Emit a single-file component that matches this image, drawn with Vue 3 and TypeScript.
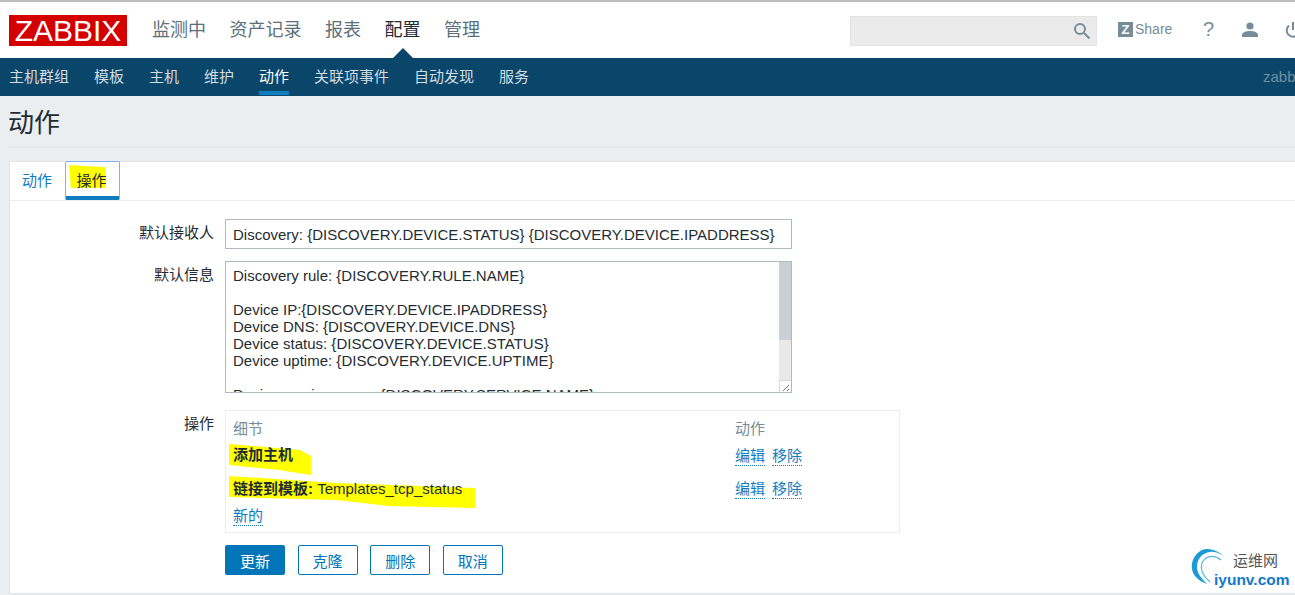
<script setup lang="ts">
const mainNav = ['监测中', '资产记录', '报表', '配置', '管理']
const subNav = ['主机群组', '模板', '主机', '维护', '动作', '关联项事件', '自动发现', '服务']
const message = `Discovery rule: {DISCOVERY.RULE.NAME}

Device IP:{DISCOVERY.DEVICE.IPADDRESS}
Device DNS: {DISCOVERY.DEVICE.DNS}
Device status: {DISCOVERY.DEVICE.STATUS}
Device uptime: {DISCOVERY.DEVICE.UPTIME}

Device service name: {DISCOVERY.SERVICE.NAME}
Device service port: {DISCOVERY.SERVICE.PORT}`
</script>

<template>
  <div class="page">
    <header class="top">
      <div class="logo">ZABBIX</div>
      <nav class="main-nav">
        <a v-for="n in mainNav" :key="n" :class="{ on: n === '配置' }">{{ n }}</a>
      </nav>
      <div class="tools">
        <div class="search">
          <svg width="18" height="18" viewBox="0 0 18 18" fill="none" stroke="#768d99" stroke-width="2">
            <circle cx="7" cy="7" r="5" />
            <path d="M11 11l5.500 5.500" />
          </svg>
        </div>
        <div class="share"><span class="z">Z</span>Share</div>
        <span class="help">?</span>
        <svg class="user" width="16" height="16" viewBox="0 0 16 16" fill="#768d99">
          <circle cx="8" cy="4" r="3.6" />
          <path d="M0 15v-2c0-2.500 4-4 8-4s8 1.500 8 4v2z" />
        </svg>
        <svg class="power" width="16" height="16" viewBox="0 0 16 16" fill="none" stroke="#768d99" stroke-width="2">
          <path d="M4 3.500a6.300 6.300 0 1 0 8 0" />
          <path d="M8 0v8" />
        </svg>
      </div>
    </header>
    <nav class="sub-nav">
      <a v-for="n in subNav" :key="n" :class="{ on: n === '动作' }">{{ n }}</a>
      <span class="server">zabbix</span>
    </nav>
    <main class="content">
      <h1 class="title">动作</h1>
      <section class="card">
        <div class="tabs">
          <a class="tab">动作</a>
          <a class="tab active"><i class="mark mark-tab"></i>操作</a>
        </div>
        <div class="form">
          <label>默认接收人</label>
          <input class="input" readonly value="Discovery: {DISCOVERY.DEVICE.STATUS} {DISCOVERY.DEVICE.IPADDRESS}" />
          <label>默认信息</label>
          <div class="area-wrap">
            <textarea class="area" readonly :value="message"></textarea>
            <div class="scrollbar">
              <div class="thumb"></div>
              <div class="grip">
                <svg width="11" height="11" viewBox="0 0 11 11" fill="none" stroke="#777" stroke-width="1">
                  <path d="M3 10l6-6M7 10l2-2" />
                </svg>
              </div>
            </div>
          </div>
          <label class="op-label">操作</label>
          <div class="ops">
            <div class="op-grid">
              <span class="head">细节</span><span class="head">动作</span>
              <div class="cell"><i class="mark mark-one"></i><b>添加主机</b></div>
              <div class="links"><a>编辑</a><a>移除</a></div>
              <div class="cell cell-two"><i class="mark mark-two"></i><b>链接到模板:</b> Templates_tcp_status</div>
              <div class="links"><a>编辑</a><a>移除</a></div>
            </div>
            <a class="new">新的</a>
          </div>
          <div class="buttons">
            <button class="btn primary">更新</button>
            <button class="btn">克隆</button>
            <button class="btn">删除</button>
            <button class="btn">取消</button>
          </div>
        </div>
      </section>
    </main>
    <div class="watermark">
      <svg width="44" height="44" viewBox="0 0 44 44">
        <path fill="#1c9ad6" d="M37 13C30 3 18 0 12 3C4 7 1 15 2 22C3 29 9 34 17 37C11 31 7 26 7 20C7 12 12 6 20 5C27 4 33 8 37 13Z" />
        <path fill="none" stroke="#56b6e4" stroke-width="1.200" d="M31 13C24 7 15 9 12 16C10 22 13 29 20 35" />
      </svg>
      <div class="wm-text">
        <span class="wm-cn">运维网</span>
        <span class="wm-en">iyunv.com</span>
      </div>
    </div>
  </div>
</template>

<style>
html, body { margin: 0; overflow: hidden; background: #ebeef0; }
</style>

<style scoped>
.page {
  position: relative;
  width: 1295px;
  height: 595px;
  overflow: hidden;
  background: #ebeef0;
  font-family: "Liberation Sans", "Noto Sans CJK SC", sans-serif;
  font-size: 15px;
  color: #1f2c33;
}
a { cursor: pointer; }
.top {
  box-sizing: border-box;
  height: 58px;
  border-top: 2px solid #bdbdbd;
  background: #fff;
  display: flex;
  align-items: flex-start;
  padding-left: 9px;
}
.logo {
  margin-top: 13px;
  width: 118px;
  height: 31px;
  flex: none;
  background: #d40000;
  color: #fff;
  font-size: 30px;
  line-height: 32px;
  text-align: center;
  white-space: nowrap;
}
.main-nav {
  display: flex;
  gap: 23.5px;
  margin-left: 25px;
  margin-top: 16px;
  font-size: 18px;
  line-height: 24px;
  color: #5c6f7a;
}
.main-nav a { position: relative; }
.main-nav a.on { color: #1f2c33; }
.main-nav a.on::after {
  content: "";
  position: absolute;
  left: 50%;
  top: 30px;
  margin-left: -10px;
  border: 10px solid transparent;
  border-top: 0;
  border-bottom-color: #0a466a;
}
.tools {
  margin-left: auto;
  display: flex;
  align-items: center;
  width: 445px;
  flex: none;
  margin-top: 14px;
  height: 30px;
}
.search {
  box-sizing: border-box;
  width: 247px;
  height: 30px;
  background: #ebebeb;
  border: 1px solid #e3e3e3;
  display: flex;
  justify-content: flex-end;
  align-items: center;
  padding-right: 5px;
  flex: none;
}
.share {
  display: flex;
  align-items: center;
  margin: 0 0 4px 21px;
  color: #768d99;
  font-size: 14px;
  width: 66px;
  flex: none;
}
.z {
  width: 15px;
  height: 15px;
  background: #768d99;
  color: #fff;
  font-weight: 700;
  font-size: 13px;
  line-height: 15px;
  text-align: center;
  margin-right: 2px;
}
.help { color: #768d99; font-size: 20px; width: 11px; margin: 0 0 4px 19px; flex: none; }
.user { margin: 0 0 2px 28px; flex: none; }
.power { margin: 0 0 2px 27px; flex: none; }
.sub-nav {
  height: 38px;
  background: #0a466a;
  display: flex;
  gap: 25px;
  padding-left: 9px;
  font-size: 15px;
  line-height: 37px;
  color: #d3dce1;
  position: relative;
}
.sub-nav a { box-sizing: border-box; height: 37px; }
.sub-nav a.on {
  color: #fff;
  border-bottom: 4px solid #0f7cc0;
}
.server {
  position: absolute;
  left: 1263px;
  color: #6f8fa1;
}
.content { padding: 0 0 0 9px; }
.title {
  margin: 0 0 13px -1px;
  height: 52px;
  box-sizing: border-box;
  border-bottom: 1px solid #dfe4e7;
  font-size: 26px;
  font-weight: 400;
  line-height: 54px;
  color: #1f2c33;
}
.card {
  background: #fff;
  border: 1px solid #dfe4e7;
  height: 433px;
  width: 1300px;
  box-sizing: border-box;
}
.tabs {
  display: flex;
  height: 38px;
  border-bottom: 1px solid #ebeef0;
  padding-left: 12px;
  line-height: 38px;
}
.tab { color: #0f7cc0; display: block; width: 30px; text-align: center; }
.tab.active {
  position: relative;
  z-index: 0;
  box-sizing: border-box;
  width: 55px;
  height: 39px;
  margin-left: 13px;
  margin-top: -1px;
  padding-right: 2px;
  border: 1px solid #7fb0f0;
  border-bottom: 4px solid #0f7cc0;
  border-radius: 2px;
  color: #1f2c33;
  line-height: 37px;
}
.mark { position: absolute; z-index: -1; background: #ff0; }
.mark-tab {
  left: 3px;
  top: 3px;
  width: 37px;
  height: 23px;
  clip-path: polygon(0 0, 100% 10%, 100% 100%, 5% 100%);
}
.form {
  display: grid;
  grid-template-columns: 204px 675px;
  column-gap: 11px;
  row-gap: 12px;
  align-items: start;
  padding-top: 18px;
}
label { text-align: right; line-height: 28px; color: #1f2c33; }
.input, .area {
  box-sizing: border-box;
  width: 567px;
  border: 1px solid #acbbc2;
  background: #fff;
  color: #1f2c33;
  font: inherit;
  outline: none;
  margin: 0;
  display: block;
}
.input { height: 30px; line-height: 18px; padding: 5px 7px; }
.area-wrap { position: relative; width: 567px; height: 132px; }
.area {
  height: 132px;
  line-height: 17px;
  padding: 5px 7px;
  white-space: pre;
  overflow: hidden;
  resize: none;
}
.scrollbar {
  position: absolute;
  right: 1px;
  top: 1px;
  bottom: 1px;
  width: 12px;
  background: #e9e9e9;
  display: flex;
  flex-direction: column;
}
.thumb { height: 78px; background: #c8d0d5; }
.grip {
  margin-top: auto;
  height: 11px;
  background: #fff;
  border: 1px solid #d8d8d8;
  border-width: 1px 0 0 1px;
  display: flex;
}
.op-label { margin-top: 5px; }
.ops {
  box-sizing: border-box;
  margin-top: 5px;
  width: 675px;
  height: 123px;
  border: 1px solid #ebeef0;
  padding: 8px 7px 0;
}
.op-grid {
  display: grid;
  grid-template-columns: 502px 1fr;
  grid-template-rows: 19px 33px 29px;
  line-height: 20px;
  align-items: start;
}
.head { color: #768d99; }
.cell { position: relative; z-index: 0; padding-top: 7px; white-space: nowrap; }
.cell-two { padding-top: 8px; }
.mark-one {
  left: -4px;
  top: 6px;
  width: 82px;
  height: 31px;
  clip-path: polygon(0 0, 71px 6px, 82px 12px, 82px 31px, 50px 26px, 0 21px);
}
.mark-two {
  left: -4px;
  top: 5px;
  width: 246px;
  height: 32px;
  clip-path: polygon(0 0, 108px 7px, 246px 12px, 246px 32px, 160px 30px, 108px 24px, 0 21px);
}
.links { padding-top: 8px; display: flex; gap: 7px; }
.links a, .new {
  color: #0f7cc0;
  border-bottom: 1px dotted #0f7cc0;
  line-height: 19px;
  display: inline-block;
}
.new { margin-top: 6px; }
.buttons {
  grid-column: 2;
  display: flex;
  gap: 12.6px;
}
.btn {
  box-sizing: border-box;
  width: 60px;
  height: 30px;
  border: 1px solid #0275b8;
  border-radius: 2px;
  background: #fff;
  color: #0275b8;
  font: inherit;
  padding: 0;
}
.btn.primary { background: #0275b8; color: #fff; }
.watermark {
  position: absolute;
  left: 1190px;
  top: 547px;
  width: 105px;
  height: 44px;
  display: flex;
  background: #fff;
}
.wm-text {
  position: absolute;
  left: 24px;
  top: 5px;
  width: 81px;
  display: flex;
  flex-direction: column;
  line-height: 17px;
}
.wm-cn { margin-left: 19px; color: #555; font-size: 15px; }
.wm-en { color: #1478c8; font-size: 15.5px; font-weight: 700; margin-top: 2px; }
</style>
